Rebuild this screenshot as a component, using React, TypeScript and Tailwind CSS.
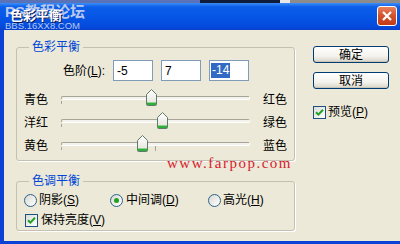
import React from "react";

const U = ({ c }: { c: string }) => <span className="underline underline-offset-[1px]">{c}</span>;

function Check({ checked = true }: { checked?: boolean }) {
  return (
    <div className="w-[13px] h-[13px] border border-[#1c5180] bg-[linear-gradient(135deg,#dcdcd7,#ffffff)] flex items-center justify-center shrink-0">
      {checked && (
        <svg width="9" height="9" viewBox="0 0 9 9">
          <path d="M1 4.2 L3.4 6.6 L8 1.8" fill="none" stroke="#21a121" strokeWidth="2" />
        </svg>
      )}
    </div>
  );
}

function Radio({ on = false }: { on?: boolean }) {
  return (
    <div className="w-[13px] h-[13px] rounded-full border border-[#2c628b] bg-[linear-gradient(135deg,#d8d8d2,#ffffff)] flex items-center justify-center shrink-0">
      {on && <div className="w-[5px] h-[5px] rounded-full bg-[#21a121]" />}
    </div>
  );
}

function Thumb() {
  return (
    <svg width="11" height="17" viewBox="0 0 11 17">
      <defs>
        <linearGradient id="tg" x1="0" y1="0" x2="0" y2="1">
          <stop offset="0" stopColor="#ffffff" />
          <stop offset="1" stopColor="#e4e2d8" />
        </linearGradient>
      </defs>
      <path d="M5.5 0.5 L10.5 5.5 L10.5 15.5 Q10.5 16.5 9.5 16.5 L1.5 16.5 Q0.5 16.5 0.5 15.5 L0.5 5.5 Z" fill="url(#tg)" stroke="#5d7a6a" />
      <rect x="1" y="13.5" width="9" height="2.5" fill="#2fae3a" />
      <rect x="1" y="13" width="9" height="1" fill="#8ed38f" />
    </svg>
  );
}

function SliderRow({ left, right, pos, tick }: { left: string; right: string; pos: number; tick?: boolean }) {
  return (
    <div className="flex items-center h-[23px]">
      <span className="ml-[7px] w-[24px]">{left}</span>
      <div className="relative ml-[13px] w-[189px] h-[23px]">
        <div className="absolute left-0 right-0 top-[8px] h-[4px] rounded-[2px] border border-[#a7a597] border-b-white border-r-white bg-[#f3f2ec]" />
        <div className="absolute left-0 top-[13px] w-[1px] h-[3px] bg-[#a7a597]" />
        {tick && <div className="absolute left-[94px] top-[12px] w-[1px] h-[5px] bg-[#a7a597]" />}
        <div className="absolute top-[1px]" style={{ left: pos }}>
          <Thumb />
        </div>
      </div>
      <span className="ml-[13px]">{right}</span>
    </div>
  );
}

function Btn({ children }: { children: React.ReactNode }) {
  return (
    <div className="w-[76px] h-[17px] rounded-[3px] border border-[#003c74] bg-[linear-gradient(180deg,#ffffff_0%,#f4f3ee_60%,#d8d4c8_100%)] flex items-center justify-center text-[12px] leading-none shadow-[inset_0_-1px_0_#c8c4b6]">
      {children}
    </div>
  );
}

export default function App() {
  return (
    <div className="w-[400px] h-[244px] overflow-hidden flex flex-col relative bg-[#ece9d8] text-[12px] leading-[16px] text-black font-['Liberation_Sans','Noto_Sans_CJK_SC',sans-serif]">
      {/* top strip */}
      <div className="h-[3px] flex">
        <div className="w-[200px] bg-[#5a72b8]" />
        <div className="w-[80px] bg-[#101c3c]" />
        <div className="w-[10px] bg-[#e8e8e8]" />
        <div className="flex-1 bg-[#8c8c8c]" />
      </div>
      {/* title bar */}
      <div className="h-[27px] relative flex items-center justify-between bg-[linear-gradient(180deg,#3d8ef6_0%,#0c5fe9_14%,#0655e5_55%,#0349dc_90%,#0a3fc8_100%)]">
        <div className="absolute left-[5px] top-[1px] flex flex-col leading-none text-[#b8c8ee]">
          <span className="text-[15px] font-bold">PS教程论坛</span>
          <span className="text-[9.5px] mt-[2px]">BBS.16XX8.COM</span>
        </div>
        <span className="relative ml-[10px] mb-[2px] text-[13px] font-bold text-white [text-shadow:1px_1px_0_#0a1850]">色彩平衡</span>
        <div className="relative mr-[3px] mb-[1px] w-[20px] h-[20px] rounded-[3px] border border-white bg-[linear-gradient(180deg,#e8825e_0%,#d5532f_45%,#c13a18_100%)] flex items-center justify-center">
          <svg width="10" height="10" viewBox="0 0 10 10">
            <path d="M1 1 L9 9 M9 1 L1 9" stroke="white" strokeWidth="2.2" />
          </svg>
        </div>
      </div>
      {/* body */}
      <div className="flex-1 flex border-l-4 border-b-[3px] border-[#0a42d6]">
        {/* left column */}
        <div className="pl-[12px] pt-[9px] flex flex-col">
          <fieldset className="w-[279px] border border-[#c4c1b2] rounded-[3px] pb-[3px] shadow-[1px_1px_0_#ffffff]">
            <legend className="ml-[12px] px-[3px] text-[#0046d5] leading-[16px]">色彩平衡</legend>
            <div className="flex items-center h-[21px] mt-[5px]">
              <span className="ml-[46px] w-[50px]">色阶(<U c="L" />):</span>
              <div className="flex gap-[8px]">
                <div className="w-[40px] h-[21px] bg-white border border-[#7f9db9] flex items-center pl-[3px]">-5</div>
                <div className="w-[40px] h-[21px] bg-white border border-[#7f9db9] flex items-center pl-[3px]">7</div>
                <div className="w-[40px] h-[21px] bg-white border border-[#7f9db9] flex items-center pl-[1px]">
                  <span className="bg-[#316ac5] text-white px-[1px] leading-[15px]">-14</span>
                </div>
              </div>
            </div>
            <div className="mt-[7px] flex flex-col">
              <SliderRow left="青色" right="红色" pos={85} />
              <SliderRow left="洋红" right="绿色" pos={96} />
              <SliderRow left="黄色" right="蓝色" pos={76} tick />
            </div>
          </fieldset>
          <fieldset className="mt-[12px] w-[279px] border border-[#c4c1b2] rounded-[3px] pb-[2px] shadow-[1px_1px_0_#ffffff]">
            <legend className="ml-[12px] px-[3px] text-[#0046d5] leading-[16px]">色调平衡</legend>
            <div className="flex items-center h-[16px] mt-[3px] pl-[7px]">
              <div className="w-[86px] flex items-center gap-[2px]">
                <Radio />
                <span>阴影(<U c="S" />)</span>
              </div>
              <div className="w-[98px] flex items-center gap-[3px]">
                <Radio on />
                <span>中间调(<U c="D" />)</span>
              </div>
              <div className="flex items-center gap-[2px]">
                <Radio />
                <span>高光(<U c="H" />)</span>
              </div>
            </div>
            <div className="flex items-center h-[16px] mt-[4px] pl-[8px] gap-[3px]">
              <Check />
              <span>保持亮度(<U c="V" />)</span>
            </div>
          </fieldset>
        </div>
        {/* right column */}
        <div className="ml-[18px] pt-[16px] flex flex-col">
          <Btn>确定</Btn>
          <div className="mt-[9px]">
            <Btn>取消</Btn>
          </div>
          <div className="mt-[15px] flex items-center gap-[2px]">
            <Check />
            <span>预览(<U c="P" />)</span>
          </div>
        </div>
      </div>
      {/* watermark */}
      <div className="absolute left-[167px] top-[154px] text-[15px] leading-[18px] tracking-[1.5px] text-[#d8202c] font-['Liberation_Serif',serif]">
        www.farpop.com
      </div>
    </div>
  );
}
